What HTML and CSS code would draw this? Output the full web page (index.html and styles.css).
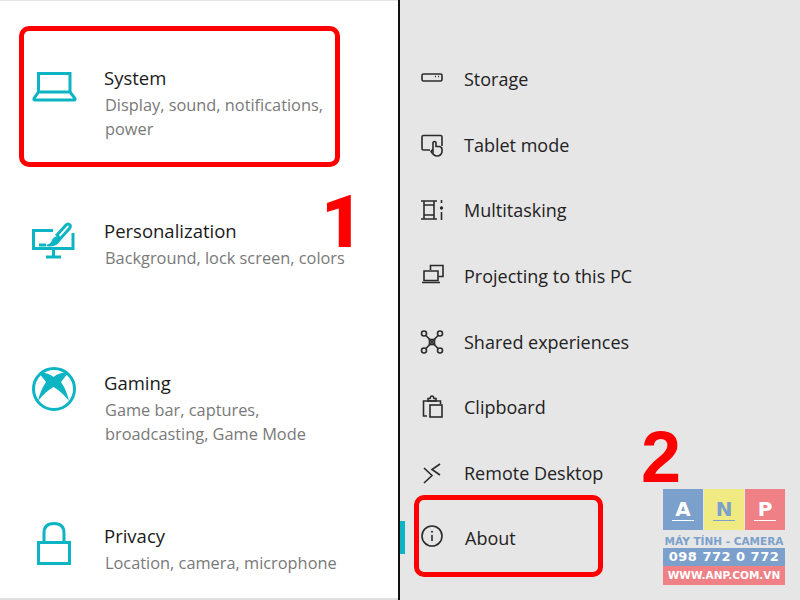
FILE: index.html
```html
<!DOCTYPE html>
<html lang="en">

<head>
    <meta charset="UTF-8">
    <meta name="viewport" content="width=device-width, initial-scale=1.0">
    <title>Settings</title>
    <link rel="stylesheet" href="styles.css">
</head>

<body>
    <div class="screen">
        <!-- left: settings home -->
        <section class="home">
            <div class="home-item">
                <svg class="home-icon" viewBox="0 0 44 44">
                    <path d="M6.500 28V9.500H38V28" />
                    <path d="M6.500 28H38L43 34.500Q43.500 36 42 36H3Q1.500 36 2 34.500Z" />
                </svg>
                <div>
                    <div class="home-title">System</div>
                    <div class="home-desc">Display, sound, notifications,<br>power</div>
                </div>
            </div>
            <div class="home-item">
                <svg class="home-icon" viewBox="0 0 44 44">
                    <path d="M21 13.500H1.500V31.500H41V16" />
                    <path d="M21.500 31.500V39M14 40H29" />
                    <path d="M7 28H14" />
                    <path d="M25 18L34 8Q36 6 38 8Q39 10 37 12L28 22Z" />
                    <path class="solid" d="M24 19.500L28.500 23.500Q26 29 18 29.500Q15 30 14 28Q19 27 20 23Q21 20 24 19.500Z" />
                </svg>
                <div>
                    <div class="home-title">Personalization</div>
                    <div class="home-desc">Background, lock screen, colors</div>
                </div>
            </div>
            <div class="home-item">
                <svg class="home-icon" viewBox="0 0 44 44">
                    <circle cx="22" cy="20" r="20.500" />
                    <path class="solid" d="M7 4Q15 3 21.500 8Q28 3 36 4Q33 8 29 13Q35 22 37 32Q30 23 21.500 18Q13 23 6 32Q8 22 14 13Q10 8 7 4Z" />
                </svg>
                <div>
                    <div class="home-title">Gaming</div>
                    <div class="home-desc">Game bar, captures,<br>broadcasting, Game Mode</div>
                </div>
            </div>
            <div class="home-item home-item-last">
                <svg class="home-icon" viewBox="0 0 44 44">
                    <path d="M12 20V11Q12 1.500 22 1.500Q32 1.500 32 11V20" />
                    <rect x="6.500" y="20.500" width="31" height="21" />
                </svg>
                <div>
                    <div class="home-title">Privacy</div>
                    <div class="home-desc">Location, camera, microphone</div>
                </div>
            </div>
        </section>

        <!-- right: system menu -->
        <section class="menu">
            <div class="menu-item">
                <svg class="menu-icon" viewBox="0 0 24 24">
                    <rect x="2" y="7" width="20" height="7" rx="1.500" />
                    <path d="M15 9.500H16M18 9.500H19" />
                </svg>
                <span>Storage</span>
            </div>
            <div class="menu-item">
                <svg class="menu-icon" viewBox="0 0 24 24">
                    <path d="M10 17H3.500Q2 17 2 15.500V4Q2 2.500 3.500 2.500H20.500Q22 2.500 22 4V13" />
                    <path d="M13 18V9.500Q14.500 7.500 16 9.500V13.500H19.500Q22 14 22 16.500V19Q21 23 17 23Q14 23 11 18.500Q12 16.500 13 18Z" />
                </svg>
                <span>Tablet mode</span>
            </div>
            <div class="menu-item">
                <svg class="menu-icon" viewBox="0 0 24 24">
                    <path d="M1 3H17M1 21H17M4 3V21M14 3V21M4 7H14M4 17H14" />
                    <path d="M21.500 2V5M21.500 14V22" />
                    <circle class="solid" cx="21.500" cy="10" r="1.700" />
                </svg>
                <span>Multitasking</span>
            </div>
            <div class="menu-item">
                <svg class="menu-icon" viewBox="0 0 24 24">
                    <path d="M10.500 6V1.500H23V12.500H18.500" />
                    <path d="M4 7H18V16.500H4ZM2 18.500H20" />
                </svg>
                <span>Projecting to this PC</span>
            </div>
            <div class="menu-item">
                <svg class="menu-icon" viewBox="0 0 24 24">
                    <circle cx="4" cy="3.500" r="2.500" />
                    <circle cx="20" cy="3.500" r="2.500" />
                    <circle cx="4" cy="20.500" r="2.500" />
                    <circle cx="20" cy="20.500" r="2.500" />
                    <path d="M6 5.500L18 18.500M18 5.500L6 18.500" />
                    <rect x="9.500" y="9.500" width="5" height="5" />
                </svg>
                <span>Shared experiences</span>
            </div>
            <div class="menu-item">
                <svg class="menu-icon" viewBox="0 0 24 24">
                    <path d="M7 21H3.500V6H20.500V9" />
                    <path d="M8 6V3.500H10Q10.500 1 12 1Q13.500 1 14 3.500H16V6Z" />
                    <rect x="10" y="10" width="12" height="12" />
                </svg>
                <span>Clipboard</span>
            </div>
            <div class="menu-item">
                <svg class="menu-icon" viewBox="0 0 24 24">
                    <path d="M4 7L12 14.500L4 22" />
                    <path d="M20 3L12 8.500L20 14" />
                </svg>
                <span>Remote Desktop</span>
            </div>
            <div class="menu-item">
                <svg class="menu-icon" viewBox="0 0 24 24">
                    <circle cx="12" cy="10" r="10" />
                    <path d="M12 9V15" />
                    <circle class="solid" cx="12" cy="5.800" r="1" />
                </svg>
                <span class="menu-about">About</span>
            </div>
        </section>

        <!-- things drawn on top of the screenshot -->
        <div class="mark mark-system"></div>
        <div class="mark mark-about"></div>
        <div class="step step-one">1</div>
        <div class="step step-two">2</div>
        <div class="active-bar"></div>

        <div class="logo">
            <div class="logo-tiles">
                <div class="tile tile-blue">A</div>
                <div class="tile tile-yellow">N</div>
                <div class="tile tile-red">P</div>
            </div>
            <div class="logo-sub">MÁY TÍNH - CAMERA</div>
            <div class="logo-phone">098 772 0 772</div>
            <div class="logo-web">WWW.ANP.COM.VN</div>
        </div>
    </div>
</body>

</html>
```

FILE: styles.css
```css
* {
    padding: 0;
    margin: 0;
    box-sizing: border-box;
}

body {
    width: 800px;
    height: 600px;
    overflow: hidden;
    font-family: "Open Sans", "Noto Sans", sans-serif;
}

.screen {
    position: relative;
    display: flex;
    width: 800px;
    height: 600px;
}

svg {
    overflow: visible;
    flex-shrink: 0;
    fill: none;
}

svg .solid {
    stroke: none;
}

/* left panel */
.home {
    width: 398px;
    height: 600px;
    padding-top: 62px;
    padding-left: 32px;
    background: #fff;
    border-top: 1px solid #e4e4e4;
    border-bottom: 2px solid #e0e0e0;
}

.home-item {
    display: flex;
    gap: 28px;
    height: 152.67px;
}

.home-item-last {
    height: 70px;
}

.home-icon {
    width: 44px;
    height: 44px;
    margin-top: 1px;
    stroke: #0db4c4;
    stroke-width: 3;
}

.home-icon .solid {
    fill: #0db4c4;
}

.home-title {
    height: 30px;
    font-size: 18.500px;
    line-height: 30px;
    color: #1a1a1a;
}

.home-desc {
    margin-top: 1px;
    margin-left: 1px;
    font-size: 16.350px;
    line-height: 23.500px;
    color: #797979;
}

/* right panel */
.menu {
    flex: 1;
    height: 600px;
    padding-top: 46.500px;
    padding-left: 20px;
    background: #e6e6e6;
    border-left: 2px solid #111;
}

.menu-item {
    display: flex;
    align-items: center;
    gap: 20px;
    height: 65.600px;
    font-size: 18px;
    color: #222;
}

.menu-about {
    margin-left: 1px;
}

.menu-icon {
    width: 24px;
    height: 24px;
    stroke: #2b2b2b;
    stroke-width: 1.600;
}

.menu-icon .solid {
    fill: #2b2b2b;
}

/* annotations */
.mark {
    position: absolute;
    border: 5px solid #fe0000;
    border-radius: 10px;
}

.mark-system {
    left: 19px;
    top: 26px;
    width: 321px;
    height: 141px;
}

.mark-about {
    left: 414px;
    top: 495px;
    width: 189px;
    height: 82px;
}

.step {
    position: absolute;
    font-family: "Liberation Sans", sans-serif;
    font-weight: bold;
    font-size: 72px;
    line-height: 54px;
    color: #fe0000;
}

.step-one {
    left: 321px;
    top: 195px;
    font-family: Roboto, sans-serif;
    font-weight: 900;
    font-size: 73px;
}

.step-two {
    left: 641px;
    top: 430px;
}

.active-bar {
    position: absolute;
    left: 400px;
    top: 521px;
    width: 5px;
    height: 33px;
    background: #0db4c4;
}

/* watermark */
.logo {
    position: absolute;
    left: 663px;
    top: 489px;
    width: 122px;
    font-family: "DejaVu Sans", sans-serif;
    font-weight: bold;
    text-align: center;
    white-space: nowrap;
}

.logo-tiles {
    display: flex;
    gap: 1px;
    height: 41px;
}

.tile {
    flex: 1;
    position: relative;
    height: 41px;
    font-size: 20px;
    line-height: 40px;
    color: #fff;
}

.tile::after {
    content: "";
    position: absolute;
    left: 9px;
    right: 9px;
    bottom: 9px;
    height: 1px;
    background: #fff;
}

.tile-blue {
    background: #7ba0cc;
}

.tile-yellow {
    background: #f0ea82;
    color: #7ba0cc;
}

.tile-yellow::after {
    background: #7ba0cc;
}

.tile-red {
    background: #ee8086;
}

.logo-sub {
    margin-top: 5px;
    height: 13px;
    font-size: 10.500px;
    line-height: 13px;
    color: #7ba0cc;
}

.logo-phone {
    height: 18px;
    font-size: 13px;
    line-height: 18px;
    letter-spacing: 0.5px;
    color: #fff;
    background: #7ba0cc;
}

.logo-web {
    height: 19px;
    font-size: 10.500px;
    line-height: 19px;
    color: #fff;
    background: #ee8086;
}
```
